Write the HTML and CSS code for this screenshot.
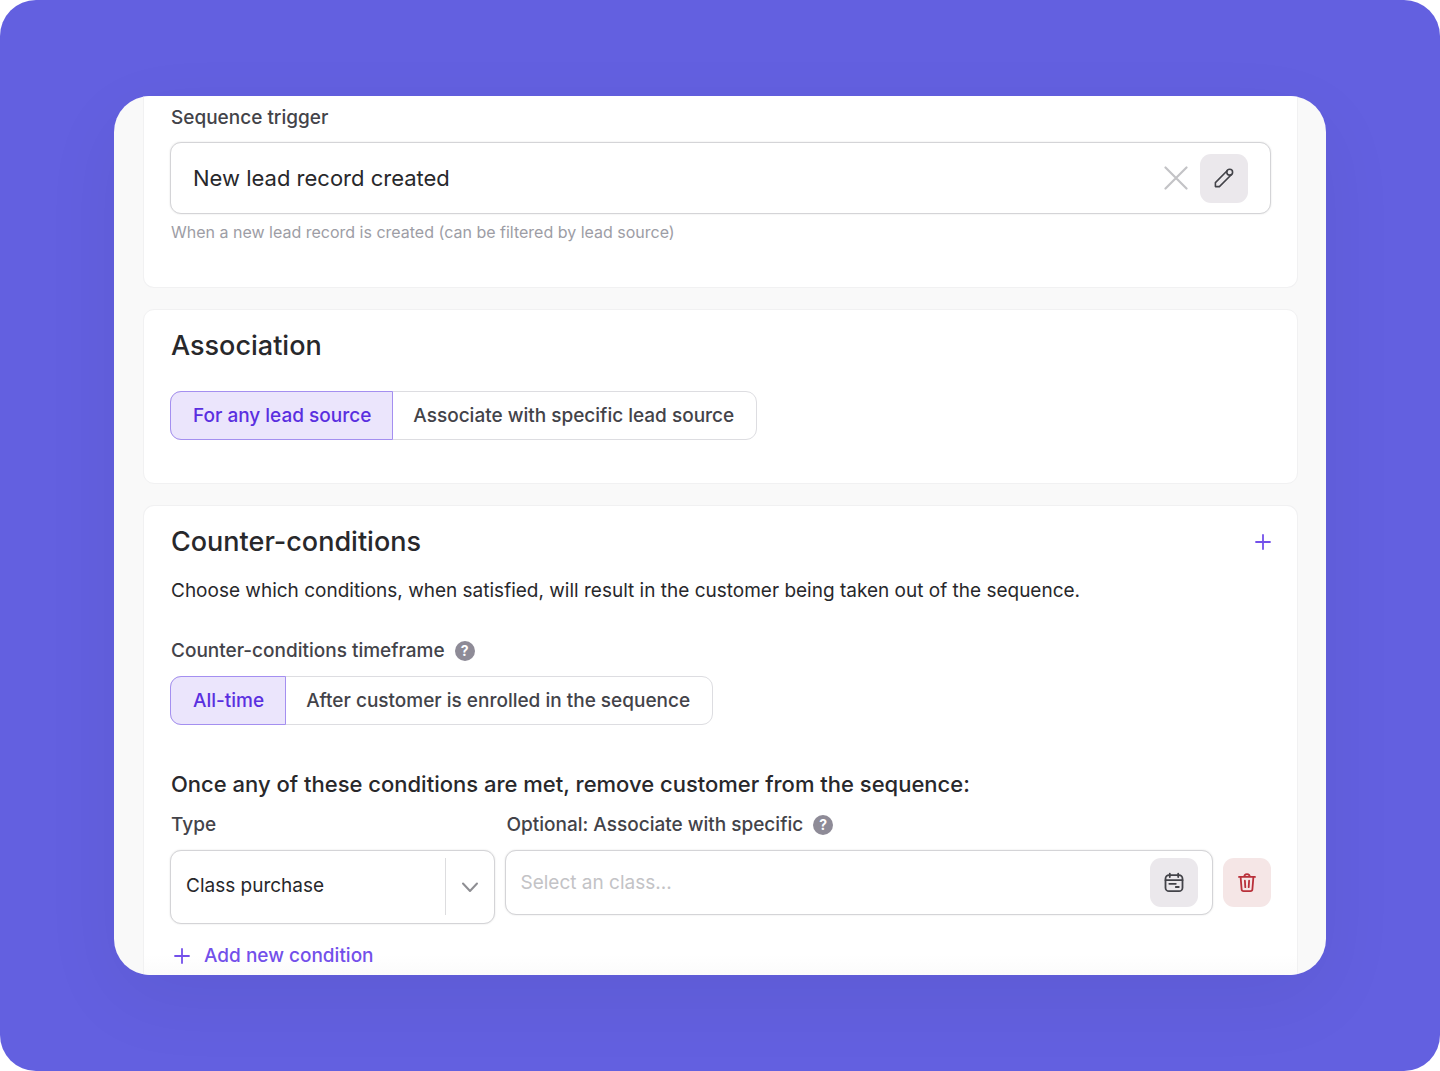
FILE: index.html
```html
<!DOCTYPE html>
<html lang="en">
<head>
  <meta charset="UTF-8">
  <meta name="viewport" content="width=device-width, initial-scale=1.0">
  <title>Sequence settings</title>
  <link rel="stylesheet" href="styles.css">
</head>
<body>
  <div class="stage">
    <main class="panel">

      <section class="card card-trigger">
        <label class="label" for="trigger">Sequence trigger</label>
        <div class="field trigger-field">
          <input class="trigger-input" id="trigger" type="text" value="New lead record created" aria-describedby="trigger-hint">
          <button class="clear-btn" type="button" aria-label="Clear trigger">
            <svg width="24" height="24" viewBox="0 0 24 24" fill="none" stroke="currentColor" stroke-width="2.200" stroke-linecap="round"><path d="M1.500 1.500L22.500 22.500M22.500 1.500L1.500 22.500"/></svg>
          </button>
          <button class="icon-btn" type="button" aria-label="Edit trigger">
            <svg width="24" height="24" viewBox="0 0 24 24" fill="none" stroke="currentColor" stroke-width="1.600" stroke-linejoin="round"><path d="M15.600 4.200L3.400 16.600v4h4L19.800 8.300"/><circle cx="17.700" cy="6.200" r="2.900"/></svg>
          </button>
        </div>
        <p class="hint" id="trigger-hint">When a new lead record is created (can be filtered by lead source)</p>
      </section>

      <section class="card">
        <h2>Association</h2>
        <div class="segmented" role="group" aria-label="Association">
          <button class="segment active" type="button" aria-pressed="true">For any lead source</button>
          <button class="segment" type="button" aria-pressed="false">Associate with specific lead source</button>
        </div>
      </section>

      <section class="card card-conditions">
        <div class="card-head">
          <h2>Counter-conditions</h2>
          <button class="plus-btn" type="button" aria-label="Add counter-condition">
            <svg width="16" height="16" viewBox="0 0 16 16" fill="none" stroke="currentColor" stroke-width="1.800" stroke-linecap="round"><path d="M8 1v14M1 8h14"/></svg>
          </button>
        </div>
        <p class="intro">Choose which conditions, when satisfied, will result in the customer being taken out of the sequence.</p>

        <div class="label-row">
          <span class="label" id="timeframe-label">Counter-conditions timeframe</span>
          <button class="help" type="button" aria-label="About the timeframe">?</button>
        </div>
        <div class="segmented" role="group" aria-labelledby="timeframe-label">
          <button class="segment active" type="button" aria-pressed="true">All-time</button>
          <button class="segment" type="button" aria-pressed="false">After customer is enrolled in the sequence</button>
        </div>

        <h3>Once any of these conditions are met, remove customer from the sequence:</h3>
        <div class="condition">
          <div>
            <label class="label" for="type">Type</label>
            <div class="select-wrap">
              <select class="field" id="type">
                <option>Class purchase</option>
              </select>
              <span class="select-arrow">
                <svg width="18" height="18" viewBox="0 0 18 18" fill="none" stroke="currentColor" stroke-width="2" stroke-linecap="round" stroke-linejoin="round"><path d="M2 5.500l7 7.500 7-7.500"/></svg>
              </span>
            </div>
          </div>
          <div>
            <div class="label-row">
              <label class="label" for="specific">Optional: Associate with specific</label>
              <button class="help" type="button" aria-label="About the association">?</button>
            </div>
            <div class="field class-field">
              <input class="class-input" id="specific" type="text" placeholder="Select an class...">
              <button class="icon-btn" type="button" aria-label="Pick a class">
                <svg width="24" height="24" viewBox="0 0 24 24" fill="none" stroke="currentColor" stroke-width="1.800" stroke-linecap="round"><rect x="3.500" y="4.200" width="17" height="16" rx="3.500"/><path d="M3.500 9.200h17M7.800 2.600v3.400M16.200 2.600v3.400M7.300 12.800h6.500M13.800 16h3"/></svg>
              </button>
            </div>
          </div>
          <button class="icon-btn delete-btn" type="button" aria-label="Delete condition">
            <svg width="24" height="24" viewBox="0 0 24 24" fill="none" stroke="currentColor" stroke-width="1.800" stroke-linecap="round" stroke-linejoin="round"><path d="M4 5.900h16M5.600 5.900l1 12.300a2 2 0 0 0 2 1.900h6.800a2 2 0 0 0 2-1.900l1-12.300M9.300 5.900c0-3.600 5.400-3.600 5.400 0M9.900 9.700l.4 6.500M14.100 9.700l-.4 6.500"/></svg>
          </button>
        </div>

        <button class="add-btn" type="button">
          <svg width="16" height="16" viewBox="0 0 16 16" fill="none" stroke="currentColor" stroke-width="1.800" stroke-linecap="round"><path d="M8 1v14M1 8h14"/></svg>
          Add new condition
        </button>
      </section>

    </main>
  </div>
</body>
</html>
```
FILE: styles.css
```css
:root {
  --brand: #6360e0;
  --accent: #7350ea;
  --accent-dark: #5a2fe0;
  --accent-bg: #ebe5fc;
  --accent-border: #a48ff0;
  --text: #28282b;
  --label: #434349;
  --muted: #9d9da5;
  --border: #d4d4d7;
}
* {
  box-sizing: border-box;
}
body {
  margin: 0;
  background: #fff;
  color: var(--text);
  font-family: Inter, sans-serif;
  font-size: 19px;
  line-height: 24px;
}
h2, h3, p {
  margin: 0;
}
h2, h3, p, .label {
  padding-left: 1px;
}
button, input, select {
  font: inherit;
  color: inherit;
}
button {
  padding: 0;
  border: none;
  background: none;
  cursor: pointer;
}
svg {
  display: block;
}
.stage {
  min-height: 100vh;
  padding: 96px 114px;
  background: var(--brand);
  border-radius: 36px;
}
.panel {
  display: flex;
  flex-direction: column;
  gap: 21px;
  padding: 0 28px 0 29px;
  overflow: hidden;
  background: #f9f9f9;
  border-radius: 36px;
  box-shadow: 0 24px 80px rgba(0, 0, 0, 0.06);
}
.card {
  padding: 18px 26px 43px;
  background: #fff;
  border: 1px solid #f1f1f2;
  border-radius: 11px;
}
.card-trigger {
  padding-top: 10px;
  border-top: none;
  border-radius: 0 0 11px 11px;
}
.card-conditions {
  padding-bottom: 7px;
  border-bottom: none;
  border-radius: 11px 11px 0 0;
  background: linear-gradient(to top, #fbfbfb, #fff 20px);
}
.card-head {
  display: flex;
  justify-content: space-between;
  align-items: center;
}
h2 {
  font-size: 27px;
  font-weight: 500;
  line-height: 36px;
}
h3 {
  margin: 44px 0 14px;
  font-size: 22px;
  font-weight: 500;
  line-height: 30px;
}
.label {
  display: block;
  color: var(--label);
  font-weight: 500;
}
.label-row {
  display: flex;
  align-items: center;
  gap: 10px;
}
.help {
  width: 20px;
  height: 20px;
  border-radius: 50%;
  background: #8e8b97;
  color: #fff;
  font-size: 14px;
  font-weight: 700;
  line-height: 20px;
}
.field {
  width: 100%;
  background: #fff;
  border: 1px solid var(--border);
  border-radius: 11px;
  box-shadow: 0 0 2px rgba(0, 0, 0, 0.12);
}
.field input {
  flex: 1;
  min-width: 0;
  padding: 0;
  border: none;
  outline: none;
  background: none;
}
.trigger-field {
  display: flex;
  align-items: center;
  gap: 12px;
  height: 72px;
  margin-top: 12px;
  padding: 0 22px;
}
.trigger-input {
  font-size: 22px;
}
.clear-btn {
  color: #c3c3c6;
}
.icon-btn {
  display: grid;
  place-items: center;
  width: 48px;
  height: 49px;
  border-radius: 11px;
  background: #ebe8ec;
  color: #434349;
}
.hint {
  margin-top: 6px;
  color: var(--muted);
  font-size: 16px;
}
.segmented {
  display: inline-flex;
  border: 1px solid #dddde1;
  border-radius: 11px;
}
h2 + .segmented {
  margin-top: 27px;
}
.segment {
  height: 47px;
  padding: 0 22px 0 20px;
  color: var(--label);
  font-weight: 500;
}
.segment.active {
  height: 49px;
  margin: -1px 0 -1px -1px;
  padding: 0 21px 0 22px;
  border: 1px solid var(--accent-border);
  border-radius: 11px 0 0 11px;
  background: var(--accent-bg);
  color: var(--accent-dark);
}
.plus-btn {
  color: var(--accent);
}
.intro {
  margin: 19px 0 36px;
}
.label-row + .segmented {
  margin-top: 13px;
}
.condition {
  display: grid;
  grid-template-columns: 23fr 50fr auto;
  gap: 10px;
}
.select-wrap {
  position: relative;
  margin-top: 13px;
}
.select-wrap select {
  display: block;
  height: 74px;
  padding: 0 64px 2px 15px;
  appearance: none;
}
/* chevron and divider on top of the native select */
.select-arrow {
  position: absolute;
  top: 8px;
  right: 0;
  bottom: 9px;
  display: grid;
  place-items: center;
  width: 50px;
  padding-right: 2px;
  border-left: 1px solid #dddddf;
  color: #8e8e93;
  pointer-events: none;
}
.class-field {
  display: flex;
  align-items: center;
  height: 65px;
  margin-top: 13px;
  padding: 0 14px;
}
.class-input::placeholder {
  color: #c3c3c6;
  opacity: 1;
}
.delete-btn {
  margin-top: 45px;
  background: #f5e6e6;
  color: #b9303a;
}
.add-btn {
  display: flex;
  align-items: center;
  gap: 14px;
  margin-top: 20px;
  padding-left: 4px;
  color: var(--accent);
  font-weight: 500;
}
```
